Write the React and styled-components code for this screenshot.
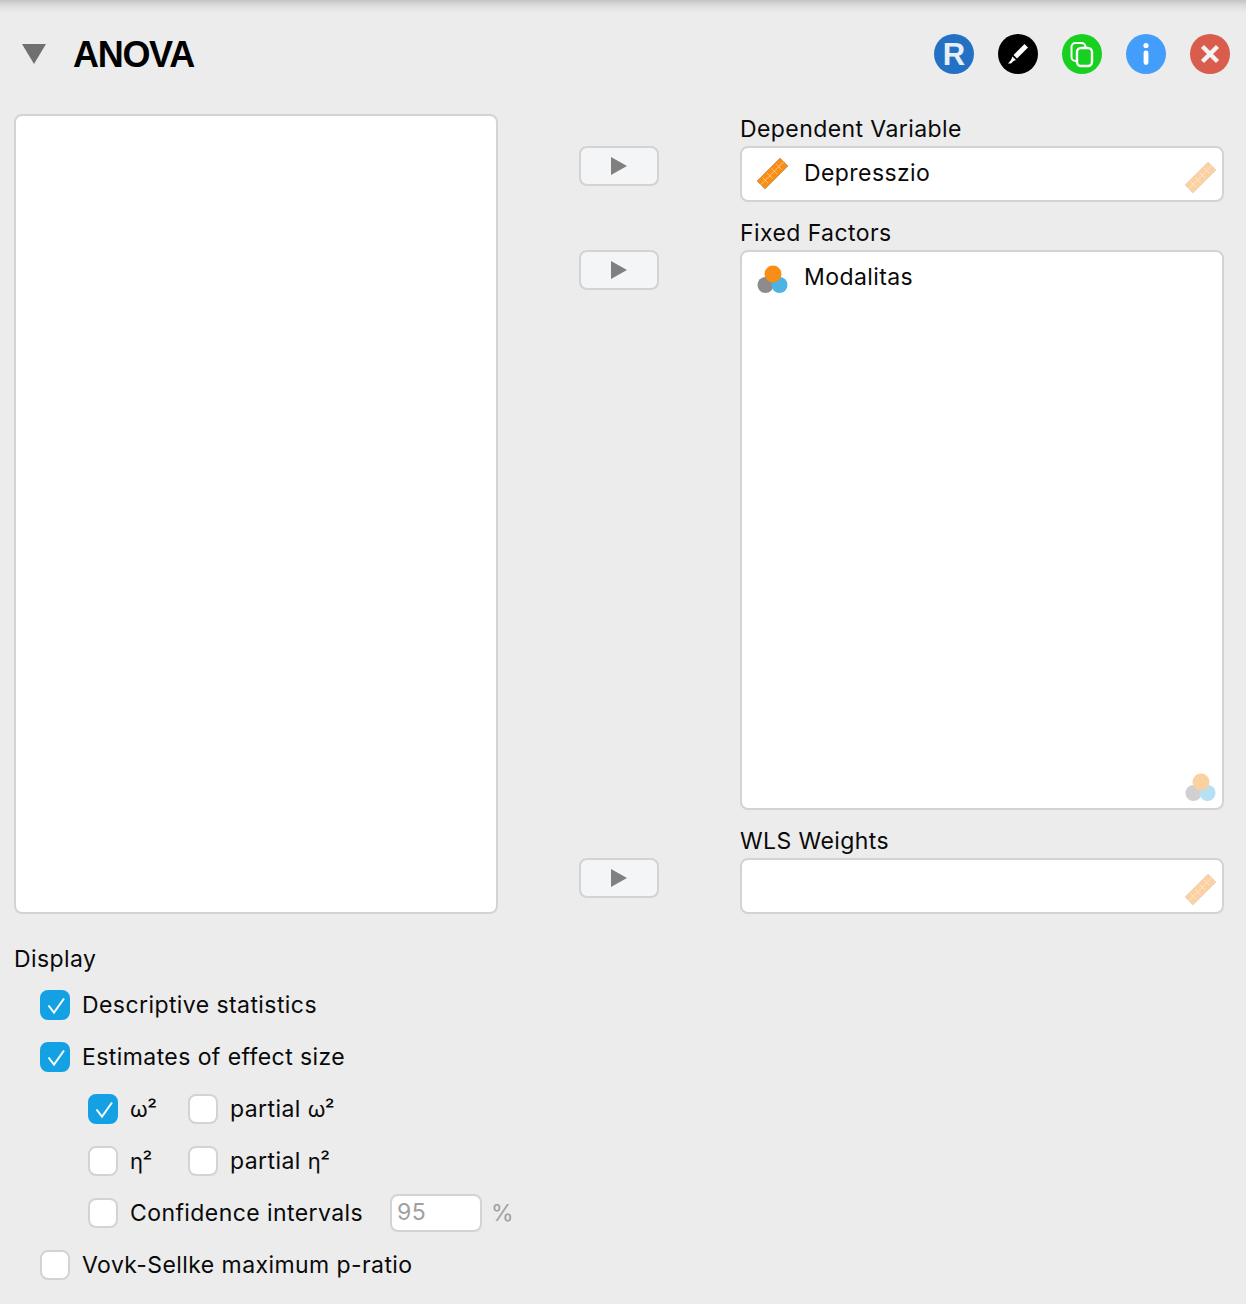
import React from "react";
import styled, { createGlobalStyle } from "styled-components";

const GlobalStyle = createGlobalStyle`
  html, body {
    margin: 0;
    padding: 0;
    background: #ececec;
  }
  body {
    font-family: Inter, "Noto Sans", "Liberation Sans", sans-serif;
    color: #0a0a0a;
  }
`;

const Page = styled.div`
  width: 1246px;
  height: 1304px;
  box-sizing: border-box;
  padding: 0 22px 0 14px;
  overflow: hidden;
  background: linear-gradient(#c4c4c4 0, #dedede 6px, #ececec 13px);
`;

const Header = styled.header`
  height: 114px;
  padding-bottom: 6px;
  box-sizing: border-box;
  display: flex;
  align-items: center;
`;

const Collapse = styled.svg`
  width: 24px;
  height: 22px;
  margin-left: 8px;
  flex-shrink: 0;
`;

const Title = styled.h1`
  margin: 2px 0 0 27px;
  font-family: "Liberation Sans", Arial, sans-serif;
  font-size: 36px;
  font-weight: 700;
  letter-spacing: -1.3px;
  color: #000;
  flex: 1;
`;

const Actions = styled.div`
  display: flex;
  gap: 24px;
  margin-right: -6px;
`;

const RoundButton = styled.div`
  width: 40px;
  height: 40px;
  border-radius: 50%;
  background: ${(p) => p.$bg};
  display: flex;
  align-items: center;
  justify-content: center;
  color: #e8eef7;
  font-family: "Liberation Sans", Arial, sans-serif;
  font-size: 31px;
  font-weight: 700;
  line-height: 1;
  svg {
    width: 40px;
    height: 40px;
    display: block;
  }
`;

const VariablesArea = styled.section`
  display: flex;
  height: 800px;
`;

const SourceList = styled.div`
  width: 484px;
  height: 800px;
  box-sizing: border-box;
  background: #fff;
  border: 2px solid #d3d3d3;
  border-radius: 8px;
  flex-shrink: 0;
`;

const AssignColumn = styled.div`
  display: flex;
  flex-direction: column;
  gap: 18px;
  padding-top: 2px;
`;

const AssignRow = styled.div`
  display: flex;
  align-items: flex-start;
`;

const ArrowSlot = styled.div`
  width: 242px;
  padding: 30px 0 0 81px;
  box-sizing: border-box;
`;

const ArrowButton = styled.div`
  width: 80px;
  height: 40px;
  box-sizing: border-box;
  background: #f4f5f7;
  border: 2px solid #d3d3d3;
  border-radius: 8px;
  display: flex;
  align-items: center;
  justify-content: center;
  svg {
    width: 16px;
    height: 18px;
  }
`;

const Field = styled.div`
  width: 484px;
`;

const FieldLabel = styled.div`
  height: 30px;
  font-size: 23px;
  line-height: 27px;
  letter-spacing: 0.42px;
`;

const Box = styled.div`
  position: relative;
  height: ${(p) => p.$height}px;
  box-sizing: border-box;
  background: #fff;
  border: 2px solid #d3d3d3;
  border-radius: 8px;
`;

const Variable = styled.div`
  display: flex;
  align-items: center;
  height: 50px;
  padding-left: 14px;
  font-size: 23px;
  letter-spacing: 0.42px;
  svg {
    width: 34px;
    height: 34px;
    margin-right: 14px;
    flex-shrink: 0;
  }
`;

const TypeHint = styled.svg`
  position: absolute;
  right: 4px;
  bottom: 6px;
  width: 34px;
  height: 34px;
  opacity: 0.4;
`;

const Options = styled.section`
  margin-top: 28px;
`;

const SectionLabel = styled.div`
  height: 36px;
  font-size: 23px;
  line-height: 34px;
  letter-spacing: 0.42px;
`;

const CheckRow = styled.div`
  height: 52px;
  display: flex;
  align-items: center;
  padding-left: ${(p) => (p.$nested ? 74 : 26)}px;
  margin-top: ${(p) => (p.$first ? "1px" : "0")};
`;

const CheckItem = styled.label`
  display: flex;
  align-items: center;
  gap: 12px;
  font-size: 23px;
  letter-spacing: 0.42px;
  white-space: pre;
  width: ${(p) => (p.$width ? `${p.$width}px` : "auto")};
`;

const Greek = styled.span`
  font-size: 22px;
  letter-spacing: -0.5px;
`;

const Box30 = styled.span`
  width: 30px;
  height: 30px;
  box-sizing: border-box;
  flex-shrink: 0;
  border-radius: 8px;
  background: ${(p) => (p.$on ? "#14a1e3" : "#fff")};
  border: 2px solid ${(p) => (p.$on ? "#14a1e3" : "#d3d3d3")};
  display: flex;
  align-items: center;
  justify-content: center;
  svg {
    width: 22px;
    height: 22px;
  }
`;

const PercentInput = styled.div`
  width: 92px;
  height: 38px;
  margin-left: 27px;
  padding-left: 5px;
  box-sizing: border-box;
  background: #fff;
  border: 2px solid #d3d3d3;
  border-radius: 8px;
  color: #a0a0a0;
  font-size: 23px;
  letter-spacing: 0.42px;
  line-height: 33px;
`;

const PercentSign = styled.span`
  margin-left: 9px;
  color: #a0a0a0;
  font-size: 23px;
`;

const Ruler = () => (
  <>
    <path d="M1 25 L24 2 L32 10 L9 33 Z" fill="#f98e16" stroke="#c9a27a" strokeWidth="1" />
    <path d="M6.5 21.5 L12 27 M11 17 L16.5 22.5 M15.5 12.5 L21 18 M20 8 L25.5 13.5 M4.5 29 L28 5.5" stroke="#ffc07a" strokeWidth="1" fill="none" />
  </>
);

const Nominal = () => (
  <>
    <circle cx="9.5" cy="25" r="8" fill="#8c8c8c" />
    <circle cx="23.5" cy="25" r="8" fill="#4db2e4" />
    <circle cx="17" cy="14" r="8.5" fill="#f98e16" />
  </>
);

const Check = ({ on }) => (
  <Box30 $on={on}>
    {on && (
      <svg viewBox="0 0 22 22">
        <path d="M4.5 11.5 L10 18.5 L20 4.5" fill="none" stroke="#fff" strokeWidth="2" />
      </svg>
    )}
  </Box30>
);

const Arrow = () => (
  <ArrowSlot>
    <ArrowButton>
      <svg viewBox="0 0 16 18">
        <path d="M0 0 L16 9 L0 18 Z" fill="#808080" />
      </svg>
    </ArrowButton>
  </ArrowSlot>
);

export default function App() {
  return (
    <Page>
      <GlobalStyle />
      <Header>
        <Collapse viewBox="0 0 24 22">
          <path d="M0 1 L24 1 L12 21 Z" fill="#707070" />
        </Collapse>
        <Title>ANOVA</Title>
        <Actions>
          <RoundButton $bg="#2371c5">R</RoundButton>
          <RoundButton $bg="#000">
            <svg viewBox="0 0 40 40">
              <path d="M26.5 10 L30 13.5 L19 24.5 L15.5 21 Z" fill="#fff" />
              <path d="M14.5 22.5 L18 26 L15.5 27 L13 29.5 L10 29.5 L13 26 Z" fill="#fff" />
            </svg>
          </RoundButton>
          <RoundButton $bg="#18d01f">
            <svg viewBox="0 0 40 40">
              <rect x="9.5" y="9" width="14" height="18" rx="4" fill="none" stroke="#fff" strokeWidth="2" />
              <rect x="15" y="14" width="15" height="18" rx="4" fill="#18d01f" stroke="#fff" strokeWidth="2.4" />
            </svg>
          </RoundButton>
          <RoundButton $bg="#429dfb">
            <svg viewBox="0 0 40 40">
              <circle cx="20" cy="11.5" r="2.6" fill="#fff" />
              <rect x="17.6" y="16.5" width="4.8" height="14.5" rx="2.4" fill="#fff" />
            </svg>
          </RoundButton>
          <RoundButton $bg="#d95c4c">
            <svg viewBox="0 0 40 40">
              <path d="M12.5 12.5 L27.5 27.5 M27.5 12.5 L12.5 27.5" stroke="#f3f3f3" strokeWidth="4.4" fill="none" />
            </svg>
          </RoundButton>
        </Actions>
      </Header>

      <VariablesArea>
        <SourceList />
        <AssignColumn>
          <AssignRow>
            <Arrow />
            <Field>
              <FieldLabel>Dependent Variable</FieldLabel>
              <Box $height={56}>
                <Variable>
                  <svg viewBox="0 0 34 34"><Ruler /></svg>
                  Depresszio
                </Variable>
                <TypeHint viewBox="0 0 34 34"><Ruler /></TypeHint>
              </Box>
            </Field>
          </AssignRow>
          <AssignRow>
            <Arrow />
            <Field>
              <FieldLabel>Fixed Factors</FieldLabel>
              <Box $height={560}>
                <Variable>
                  <svg viewBox="0 0 34 34"><Nominal /></svg>
                  Modalitas
                </Variable>
                <TypeHint viewBox="0 0 34 34"><Nominal /></TypeHint>
              </Box>
            </Field>
          </AssignRow>
          <AssignRow>
            <Arrow />
            <Field>
              <FieldLabel>WLS Weights</FieldLabel>
              <Box $height={56}>
                <TypeHint viewBox="0 0 34 34"><Ruler /></TypeHint>
              </Box>
            </Field>
          </AssignRow>
        </AssignColumn>
      </VariablesArea>

      <Options>
        <SectionLabel>Display</SectionLabel>
        <CheckRow $first>
          <CheckItem><Check on />Descriptive statistics</CheckItem>
        </CheckRow>
        <CheckRow>
          <CheckItem><Check on />Estimates of effect size</CheckItem>
        </CheckRow>
        <CheckRow $nested>
          <CheckItem $width={100}><Check on /><Greek>ω²</Greek></CheckItem>
          <CheckItem><Check /><span>partial <Greek>ω²</Greek></span></CheckItem>
        </CheckRow>
        <CheckRow $nested>
          <CheckItem $width={100}><Check /><Greek>η²</Greek></CheckItem>
          <CheckItem><Check /><span>partial <Greek>η²</Greek></span></CheckItem>
        </CheckRow>
        <CheckRow $nested>
          <CheckItem><Check />Confidence intervals</CheckItem>
          <PercentInput>95</PercentInput>
          <PercentSign>%</PercentSign>
        </CheckRow>
        <CheckRow>
          <CheckItem><Check />Vovk-Sellke maximum p-ratio</CheckItem>
        </CheckRow>
      </Options>
    </Page>
  );
}
